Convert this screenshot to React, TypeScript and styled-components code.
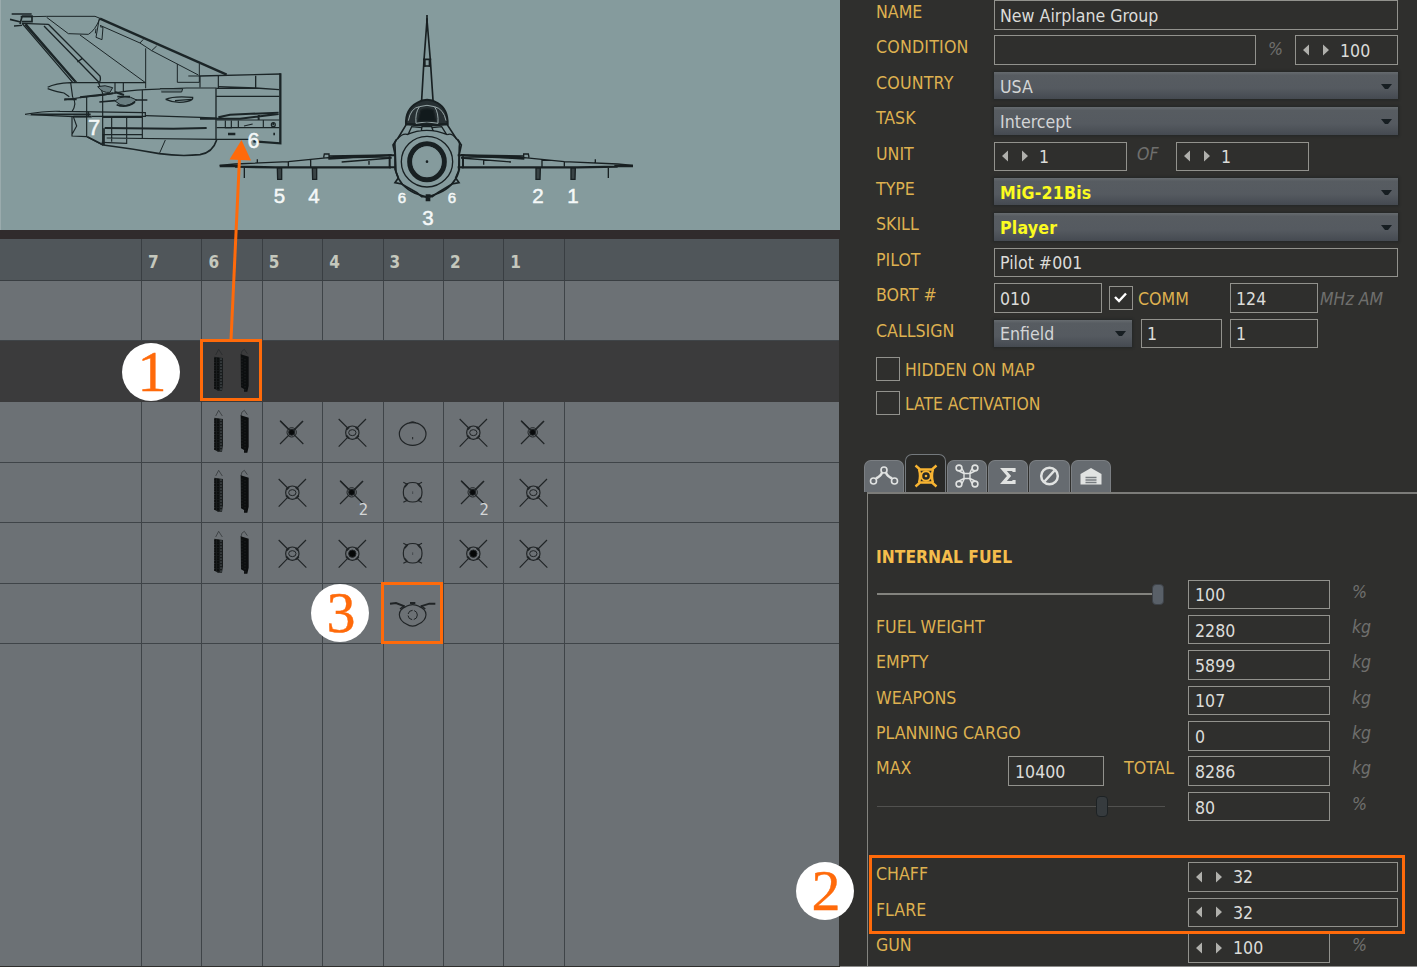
import React from "react";
import styled, { createGlobalStyle, css } from "styled-components";

const GlobalStyle = createGlobalStyle`
  * { box-sizing: border-box; }
  body { margin: 0; background: #2f2f2d; overflow: hidden; }
`;

const uiFont = `"DejaVu Sans Condensed", "DejaVu Sans", sans-serif`;
const orange = "#ff6a0a";

const Screen = styled.main`
  position: relative;
  display: flex;
  width: 1417px;
  height: 967px;
  overflow: hidden;
  background: #2f2f2d;
  font-family: ${uiFont};
  font-stretch: condensed;
  font-size: 17.6px;
`;

/* ---------- left: payload ---------- */
const PayloadPanel = styled.section`
  display: flex;
  flex-direction: column;
  width: 840px;
  height: 966px;
  flex: none;
`;
const Diagram = styled.div`
  height: 230px;
  background: #859b9d;
  border-left: 1px solid #9aabad;
  svg { display: block; margin-left: -1px; }
`;
const Divider = styled.div`
  height: 9px;
  background: #302b2c;
`;
const columns = "142px repeat(7, 60.4px) 1fr";
const GridHeader = styled.div`
  display: grid;
  grid-template-columns: ${columns};
  width: 839px;
  height: 42px;
  background: #50565a;
`;
const HeadCell = styled.div<{ $last?: boolean }>`
  display: flex;
  align-items: center;
  padding: 4px 0 0 6px;
  border-right: ${(p) => (p.$last ? "0" : "1.5px solid #393e42")};
  border-bottom: 1.5px solid #393e42;
  color: #c5c8bd;
  font-weight: bold;
  font-size: 17px;
`;
const GridRow = styled.div<{ $selected?: boolean; $fill?: boolean }>`
  display: grid;
  grid-template-columns: ${columns};
  width: 839px;
  ${(p) => (p.$fill ? css`flex: 1;` : css`height: 60.4px;`)}
  background: ${(p) => (p.$selected ? "#3b3b3c" : "#6c7175")};
`;
const Cell = styled.div<{ $plain?: boolean; $last?: boolean; $noBottom?: boolean }>`
  position: relative;
  border-right: ${(p) => (p.$last || p.$plain ? "0" : "1.5px solid #3f4448")};
  border-bottom: ${(p) => (p.$noBottom || p.$plain ? "0" : "1.5px solid #3f4448")};
  svg { display: block; margin-left: -1.2px; }
`;
const Count = styled.span`
  position: absolute;
  left: 35.5px;
  top: 38px;
  font-size: 16.5px;
  line-height: 20px;
  color: #d4d6d7;
`;

/* ---------- right: properties ---------- */
const Properties = styled.section`
  flex: 1;
  display: flex;
  flex-direction: column;
  height: 967px;
  border-bottom: 1px solid #8b8b89;
`;
const Form = styled.div`
  flex: none;
  padding-left: 36px;
  height: 354px;
`;
const Row = styled.div`
  display: flex;
  align-items: flex-start;
  height: 35.4px;
`;
const Label = styled.span<{ $w?: number; $drop?: number; $ls?: number }>`
  flex: none;
  width: ${(p) => (p.$w ? p.$w + "px" : "auto")};
  padding-top: ${(p) => p.$drop ?? 0}px;
  line-height: 24px;
  color: #deb150;
  letter-spacing: ${(p) => p.$ls ?? 0}px;
  white-space: pre;
`;
const Field = styled.div<{ $w: number; $ml?: number; $inset?: number; $top?: number }>`
  flex: none;
  display: flex;
  align-items: center;
  width: ${(p) => p.$w}px;
  height: 29.5px;
  margin-left: ${(p) => p.$ml ?? 0}px;
  padding: ${(p) => p.$top ?? 3}px 0 0 ${(p) => p.$inset ?? 5}px;
  border: 1.5px solid #92928d;
  color: #dcdcd9;
  white-space: pre;
`;
const Combo = styled.div<{ $w: number; $accent?: boolean }>`
  flex: none;
  display: flex;
  align-items: center;
  justify-content: space-between;
  width: ${(p) => p.$w}px;
  height: 27.5px;
  margin-top: 1px;
  padding: 2px 6px 0 6px;
  background: linear-gradient(#666b6f 0, #575c61 12%, #555a60 60%, #454a51 100%);
  box-shadow: 0 0 2px 1px #242727;
  color: ${(p) => (p.$accent ? "#fbfb20" : "#d3d5d6")};
  font-weight: ${(p) => (p.$accent ? "bold" : "normal")};
  letter-spacing: ${(p) => (p.$accent ? 0.2 : 0)}px;
`;
const Unit = styled.span<{ $ml: number; $drop?: number; $w?: number }>`
  flex: none;
  width: ${(p) => (p.$w ? p.$w + "px" : "auto")};
  margin-left: ${(p) => p.$ml}px;
  padding-top: ${(p) => p.$drop ?? 0}px;
  line-height: 24px;
  color: #6f6f6d;
  font-style: italic;
  font-size: 17.5px;
  white-space: pre;
`;
const Check = styled.span<{ $ml?: number; $mt?: number }>`
  flex: none;
  display: flex;
  width: 24px;
  height: 24px;
  margin: ${(p) => p.$mt ?? 0}px 0 0 ${(p) => p.$ml ?? 0}px;
  border: 1.5px solid #92928d;
`;
const CheckRow = styled.div`
  flex: none;
  display: flex;
  gap: 5px;
  height: 34px;
  padding: 2.5px 0 0 36px;
  font-size: 17.4px;
`;
const Arrows = styled.svg`
  width: 28px;
  height: 14px;
  margin: -1px 9px 0 2px;
  fill: #b0b0ac;
`;
const Tabs = styled.div`
  display: flex;
  align-items: flex-end;
  gap: 1px;
  height: 70px;
  padding: 0 0 0 24px;
  flex: none;
`;
const Tab = styled.div<{ $active?: boolean }>`
  display: flex;
  align-items: center;
  justify-content: center;
  width: ${(p) => (p.$active ? 40.5 : 40.3)}px;
  height: ${(p) => (p.$active ? 38.5 : 32.5)}px;
  padding-top: ${(p) => (p.$active ? 5 : 0)}px;
  border: 1.5px solid ${(p) => (p.$active ? "#74797d" : "#7b7f83")};
  border-bottom: 0;
  border-radius: 7px 7px 0 0;
  background: ${(p) => (p.$active ? "#292927" : "#666b70")};
`;
const TabBody = styled.div`
  flex: 1 1 0;
  min-height: 0;
  margin-left: 27px;
  padding-left: 8px;
  border-top: 2px solid #7c7c79;
  border-left: 1.5px solid #84847f;
`;
const SectionTitle = styled.h2`
  margin: 0;
  height: 85.5px;
  padding-top: 51px;
  color: #f5bd4c;
  font-size: 17.3px;
  line-height: 24px;
  font-weight: bold;
`;
const Slider = styled.div`
  flex: none;
  display: flex;
  align-items: center;
  width: 290px;
  height: 29px;
  margin: 0 22px 0 0;
  padding-left: 1px;
`;
const Track = styled.span<{ $w: number; $dim?: boolean }>`
  width: ${(p) => p.$w}px;
  height: ${(p) => (p.$dim ? 1.5 : 2)}px;
  background: ${(p) => (p.$dim ? "#51514f" : "#83837e")};
`;
const Thumb = styled.span<{ $dim?: boolean }>`
  width: 12px;
  height: 21px;
  border-radius: 4px;
  border: 1.5px solid ${(p) => (p.$dim ? "#1d2224" : "#3d4248")};
  background: ${(p) => (p.$dim ? "#363b3e" : "#596068")};
`;
const Spacer = styled.div`
  height: 35px;
`;

/* ---------- annotations ---------- */
const Outline = styled.div<{ $x: number; $y: number; $w: number; $h: number }>`
  position: absolute;
  left: ${(p) => p.$x}px;
  top: ${(p) => p.$y}px;
  width: ${(p) => p.$w}px;
  height: ${(p) => p.$h}px;
  border: 3px solid ${orange};
`;
const Callout = styled.div<{ $x: number; $y: number }>`
  position: absolute;
  left: ${(p) => p.$x}px;
  top: ${(p) => p.$y}px;
  display: flex;
  align-items: center;
  justify-content: center;
  width: 58px;
  height: 58px;
  padding-left: 2px;
  border-radius: 50%;
  background: #fff;
  color: ${orange};
  font-family: "Liberation Serif", serif;
  font-size: 58px;
  line-height: 58px;
  -webkit-text-stroke: 0.4px ${orange};
`;
const ArrowLayer = styled.svg`
  position: absolute;
  left: 0;
  top: 0;
  pointer-events: none;
`;

function SideView() {
  return (
    <g transform="scale(.33333)" fill="none" stroke="#1b2527" strokeWidth="3">
      <path strokeWidth="5" d="M35 42H95M30 58L62 66M66 50L60 72M66 48H96V65H66M62 50H96" />
      <path d="M95 50L140 49H285L300 55M140 52L205 101L265 103Q285 92 300 55M298 55L288 112L306 119L309 82L300 80M288 86L286 100" />
      <path strokeWidth="7" d="M300 56L680 224" />
      <path d="M300 76L420 129L430 118M420 129L455 152L470 138M455 152L595 225M565 228H600M532 192V247H598V192M437 145V265M240 105L435 247" />
      <path strokeWidth="4" d="M66 70L218 247M78 72L230 247M66 70L145 73M42 78L66 76M132 78L296 246M145 73L300 228Q304 242 296 250M232 186L246 176" />
      <path strokeWidth="5" d="M75 74L225 245" />
      <path strokeWidth="3.5" d="M143 262Q165 250 212 248H438M143 266Q175 277 192 279L208 290M192 300L260 290L305 286M212 248L218 292M296 250L308 280V350M260 290V410L308 435V350M305 286Q390 270 437 269L560 264H650M345 250V282M370 250V276M427 270V415M655 228V265M600 228V262" />
      <path strokeWidth="6" d="M193 298H230M240 292L305 284L340 280M345 276L372 285" />
      <path fill="#6b7f82" d="M293 260Q315 253 338 263L330 277Q308 280 293 260M480 266H548L545 276H484M345 303Q372 278 410 300Q375 332 345 303" />
      <path strokeWidth="5" d="M298 306L345 302M408 300H442M350 314Q378 326 405 306M352 290H390" />
      <path strokeWidth="4" d="M497 298Q520 287 578 292Q580 301 563 304Q527 312 497 298M525 302L575 298" />
      <path strokeWidth="4" d="M600 228L842 222M655 260L767 264L837 269M767 227V262M650 289H838M648 265V420M650 265H770" />
      <path strokeWidth="7" d="M841 220V430L760 424" />
      <path strokeWidth="3.5" d="M75 343Q140 332 180 334L436 338V349H275M75 343L220 350H260" />
      <path strokeWidth="5" d="M92 343H272M220 350H275M265 335V348" />
      <path strokeWidth="3.5" d="M218 292Q232 310 216 335M216 350V408L260 410M220 350L230 378L215 405M436 347L600 352L650 354" />
      <path strokeWidth="6" d="M600 356H720L836 342M655 352L690 344L836 338M314 384L520 386L620 384M776 345V360" />
      <path strokeWidth="3.5" d="M308 352H427M335 352V425M380 352V430L305 427M308 404H427M320 414L650 418H760M650 360H838M650 383H838M676 362V384H694V362M715 362V383M732 378L758 372M790 360V383M814 374A5 5 0 1 0 826 374A5 5 0 1 0 814 374" />
      <path strokeWidth="8" d="M684 402H706M820 402H825M817 372H823" />
      <path strokeWidth="5" d="M262 410L310 435Q390 445 478 461Q540 470 600 464Q638 458 650 420M312 434V385" />
      <path d="M496 420L478 461M310 404V435" />
    </g>
  );
}

function Wing() {
  return (
    <g>
      <path strokeWidth="7" d="M14 498H70M60 500L180 502H528" />
      <path strokeWidth="4" d="M14 496L60 492L220 485L340 473L530 465M340 477Q440 470 530 472M220 485V500M287 478V502M462 480V494M380 486L530 474M127 478V490M326 472L328 462H342V473M88 504V534M342 468L530 465" />
      <path strokeWidth="6" d="M345 474L528 466M524 466V502M520 466H540M522 502H540" />
      <path fill="#3a4446" d="M187 504H200V538H188ZM292 504H305V538H293Z" />
    </g>
  );
}

function FrontView() {
  return (
    <g transform="translate(215 0) scale(.33333)" fill="none" stroke="#182022" strokeWidth="4">
      <path strokeWidth="5" d="M636 45V82M636 60L627 180L620 300M636 60L646 180L654 300M624 178H649M624 198H649" />
      <path strokeWidth="6" d="M636 55V85M629 178V200M644 178V200" />
      <path strokeWidth="6" fill="#273033" d="M573 373Q571 328 605 309Q636 290 668 309Q699 327 698 373Z" />
      <path stroke="#9aa9aa" strokeWidth="3" d="M580 362Q587 324 613 320Q636 312 659 320Q686 327 693 362M613 321Q600 338 603 370M659 321Q671 338 669 370M603 370Q635 361 669 370" />
      <path fill="#111a1c" d="M610 363L618 331Q636 323 655 331L662 363Z" />
      <path strokeWidth="5" fill="#859b9d" d="M574 373L548 416Q537 423 540 440L543 515Q553 558 600 580L636 592L670 580Q719 558 731 515L733 440Q737 423 724 416L696 373Q637 380 574 373Z" />
      <path strokeWidth="4" d="M575 404Q635 378 697 404M579 404L590 380L620 383M695 404L680 380L652 383M619 392L621 380H650L654 392M548 416Q564 398 579 404M724 416Q710 398 697 404" />
      <ellipse cx="636" cy="485" rx="77" ry="76" />
      <ellipse cx="636" cy="485" rx="52" ry="54" strokeWidth="15" />
      <ellipse cx="636" cy="485" rx="43" ry="45" stroke="#80979a" strokeWidth="2" />
      <circle cx="636" cy="485" r="2" />
      <path strokeWidth="5" d="M544 420L534 435L540 462V508L550 534L540 548L560 552L606 578L620 590H652L668 578L711 552L732 548L722 534L733 508V462L739 435L728 420" />
      <path strokeWidth="10" d="M632 588H647M632 599H646" />
      <Wing />
      <g transform="translate(1268 0) scale(-1 1)"><Wing /></g>
    </g>
  );
}

const diagramLabels: [string, number, number, number][] = [
  ["7", 94, 135, 22], ["6", 253.5, 148, 21.5], ["5", 279.5, 203, 20.5], ["4", 314, 203, 20.5],
  ["2", 538, 203, 20.5], ["1", 573, 203, 20.5], ["3", 428, 225, 20.5], ["6", 402, 203, 15], ["6", 452, 203, 15],
];

function AircraftDiagram() {
  return (
    <svg width="840" height="230" viewBox="0 0 840 230">
      <SideView />
      <FrontView />
      <g fill="#f4f8f8" stroke="#f4f8f8" strokeWidth=".5" fontFamily="Liberation Sans" textAnchor="middle">
        {diagramLabels.map(([t, x, y, s], i) => (
          <text key={i} x={x} y={y} fontSize={s}>{t}</text>
        ))}
      </g>
    </svg>
  );
}

type StoreKind = "pods" | "missile" | "missile2" | "rocket" | "bomb" | "tank" | "drum" | "winged";

function Store({ kind }: { kind: StoreKind }) {
  const body = (() => {
    switch (kind) {
      case "pods":
        return (
          <>
            <path d="M44 42L53 25L64 42M120 42Q120 28 130 25L139 38" strokeWidth="2.5" opacity=".7" />
            <path d="M40 47L66 51V130L63 149H51L40 143Z" fill="#191c1d" strokeWidth="0" />
            <path d="M60 52V148" stroke="#43494c" strokeWidth="4" strokeDasharray="5 4" />
            <path d="M42 50V146M51 50V148" strokeWidth="4" strokeDasharray="6 2" stroke="#070808" />
            <path d="M119 40L143 47V134L139 152H129V144L120 139Z" fill="#0c0e0f" strokeWidth="0" />
            <path d="M123 50V138M132 55V148" stroke="#33383a" strokeWidth="2" strokeDasharray="3 6" />
          </>
        );
      case "missile":
      case "missile2":
        return (
          <>
            <path d="M54 56L124 126M54 126L90 90" strokeWidth="3.5" />
            <path d="M55 57L85 87M95 85L123 57" strokeWidth="5" />
            <circle cx="89" cy="91" r="14" strokeWidth="3" />
            <circle cx="89" cy="91" r="9" fill="#080a0b" />
          </>
        );
      case "rocket":
      case "bomb":
        return (
          <>
            <path d="M50 51L77 78M105 78L132 51M50 134L77 106M106 107L133 134" strokeWidth="3.5" />
            <circle cx="91" cy="92" r="20" strokeWidth="3.5" />
            <path d="M73 83L81 75M101 75L109 83M73 101L81 109M102 109L110 101" strokeWidth="6" />
            {kind === "bomb"
              ? <circle cx="91" cy="92" r="11" fill="#050707" />
              : <ellipse cx="91" cy="92" rx="11" ry="9" />}
          </>
        );
      case "tank":
        return (
          <>
            <ellipse cx="92" cy="96" rx="40" ry="34" strokeWidth="3.5" />
            <path d="M82 62Q91 56 102 62M92 105V112" />
          </>
        );
      case "drum":
        return (
          <>
            <path d="M75 65Q92 58 109 65Q120 73 120 91Q120 109 109 116Q92 124 75 116Q64 109 64 91Q64 73 75 65Z" strokeWidth="3.5" />
            <path d="M64 61L76 67L68 76M120 61L108 67L116 76M64 121L76 115L68 106M120 121L108 115L116 106" strokeWidth="3.5" />
            <path d="M92 88V96" strokeWidth="1.5" />
          </>
        );
      case "winged":
        return (
          <>
            <path d="M73 70Q92 60 111 70Q132 78 132 95Q131 113 110 123Q92 136 73 123Q53 113 52 95Q52 78 73 70Z" strokeWidth="3.5" />
            <circle cx="92" cy="96" r="14" strokeDasharray="18 5" />
            <path d="M24 62L42 60L68 70M160 62L142 62L116 70M84 60H100" strokeWidth="6" />
            <path d="M54 78L66 68M130 78L118 68" strokeWidth="4" />
          </>
        );
    }
  })();
  return (
    <svg width="60" height="60" viewBox="0 0 180 180" fill="none" stroke="#202426" strokeWidth="3">
      {body}
    </svg>
  );
}

const slots: (StoreKind | null)[][] = [
  [null, null, null, null, null, null, null],
  [null, "pods", null, null, null, null, null],
  [null, "pods", "missile", "rocket", "tank", "rocket", "missile"],
  [null, "pods", "rocket", "missile2", "drum", "missile2", "rocket"],
  [null, "pods", "rocket", "bomb", "drum", "bomb", "rocket"],
  [null, null, null, null, "winged", null, null],
];

function Payload() {
  return (
    <PayloadPanel>
      <Diagram><AircraftDiagram /></Diagram>
      <Divider />
      <GridHeader>
        {["", "7", "6", "5", "4", "3", "2", "1", ""].map((h, i) => (
          <HeadCell key={i} $last={i === 8}>{h}</HeadCell>
        ))}
      </GridHeader>
      {slots.map((row, r) => (
        <GridRow key={r} $selected={r === 1}>
          <Cell $plain={r === 1} />
          {row.map((kind, c) => (
            <Cell key={c} $plain={r === 1}>
              {kind && <Store kind={kind} />}
              {kind === "missile2" && <Count>2</Count>}
            </Cell>
          ))}
          <Cell $plain={r === 1} $last />
        </GridRow>
      ))}
      <GridRow $fill>
        {Array.from({ length: 9 }, (_, i) => <Cell key={i} $noBottom $last={i === 8} />)}
      </GridRow>
    </PayloadPanel>
  );
}

function Select({ value, width = 404, accent }: { value: string; width?: number; accent?: boolean }) {
  return (
    <Combo $w={width} $accent={accent}>
      <span>{value}</span>
      <svg width="11" height="6" viewBox="0 0 11 6"><path d="M0 0H11L7 5H4Z" fill="#171e22" /></svg>
    </Combo>
  );
}

function Spinner({ value, width, ml }: { value: string; width: number; ml?: number }) {
  return (
    <Field $w={width} $ml={ml} $top={1}>
      <Arrows viewBox="0 0 28 14"><path d="M6 1.5V12.5L0 7ZM20 1.5V12.5L26 7Z" /></Arrows>
      {value}
    </Field>
  );
}

function WeightRow({ label, value }: { label: string; value: string }) {
  return (
    <Row>
      <Label $w={312}>{label}</Label>
      <Field $w={142} $inset={6} $top={2}>{value}</Field>
      <Unit $ml={22}>kg</Unit>
    </Row>
  );
}

function TabIcon({ name }: { name: string }) {
  const common = { width: 30, height: 26, viewBox: "0 0 30 26", fill: "none", stroke: "#e1e3e2", strokeWidth: 1.6 };
  if (name === "route")
    return (
      <svg {...common}>
        <circle cx="15" cy="7" r="3" /><circle cx="4.500" cy="18" r="3" /><circle cx="25.500" cy="18" r="3" />
        <path strokeWidth="2.600" d="M13 9.500Q12 13 7 15.500M17 9.500Q18 13 23 15.500" />
      </svg>
    );
  if (name === "payload")
    return (
      <svg {...common} stroke="#f8b432">
        <path strokeWidth="2.400" d="M4.500 2.500L9 6.500H21L25.500 2.500M4.500 23.500L9 19.500H21L25.500 23.500M8 6.500Q10 13 8 19.500M22 6.500Q20 13 22 19.500" />
        <circle cx="15" cy="13" r="4.800" strokeWidth="2" />
        <circle cx="15" cy="13" r="1.300" fill="#f8b432" stroke="none" />
      </svg>
    );
  if (name === "systems")
    return (
      <svg {...common}>
        <circle cx="7" cy="5" r="2.900" /><circle cx="23" cy="5" r="2.900" />
        <circle cx="7" cy="21" r="2.900" /><circle cx="23" cy="21" r="2.900" />
        <path strokeWidth="1.400" d="M7 8L12 10.500V15.500L7 18M23 8L18 10.500V15.500L23 18M10 5.500L12.500 10.500H17.500L20 5.500M10 20.500L12.500 15.500H17.500L20 20.500" />
      </svg>
    );
  if (name === "summary")
    return <svg {...common}><path strokeWidth="3.200" d="M21 9V6.500H10.500L16 13L10.500 19.500H21V17" /></svg>;
  if (name === "none")
    return <svg {...common}><circle cx="14.500" cy="13" r="8.300" strokeWidth="2.500" /><path strokeWidth="2.500" d="M9.500 18.500L19.500 7.500" /></svg>;
  return (
    <svg {...common}>
      <path d="M4.500 21.500V11L15 5L25.500 11V21.500Z" fill="#e1e3e2" stroke="none" />
      <path stroke="#777c80" strokeWidth="1.300" d="M9.500 14.500H20.500M9.500 17H20.500M9.500 19.500H20.500" />
    </svg>
  );
}

const tabs = ["route", "payload", "systems", "summary", "none", "base"];

export default function App() {
  return (
    <>
      <GlobalStyle />
      <Screen>
        <Payload />
        <Properties>
          <Form>
            <Row><Label $w={118}>NAME</Label><Field $w={404}>New Airplane Group</Field></Row>
            <Row>
              <Label $w={118} $ls={0.2}>CONDITION</Label><Field $w={262} />
              <Unit $ml={12} $drop={2} $w={27}>%</Unit><Spinner value="100" width={103} />
            </Row>
            <Row><Label $w={118} $ls={0.2}>COUNTRY</Label><Select value="USA" /></Row>
            <Row><Label $w={118}>TASK</Label><Select value="Intercept" /></Row>
            <Row>
              <Label $w={118}>UNIT</Label><Spinner value="1" width={133} />
              <Unit $ml={10} $w={39}>OF</Unit><Spinner value="1" width={133} />
            </Row>
            <Row><Label $w={118}>TYPE</Label><Select value="MiG-21Bis" accent /></Row>
            <Row><Label $w={118}>SKILL</Label><Select value="Player" accent /></Row>
            <Row><Label $w={118}>PILOT</Label><Field $w={404} $top={2}>Pilot #001</Field></Row>
            <Row>
              <Label $w={118}>BORT #</Label><Field $w={107.5}>010</Field>
              <Check $ml={7.5} $mt={2.5}>
                <svg width="21" height="21" viewBox="0 0 21 21" fill="none" stroke="#fff" strokeWidth="2.400"><path d="M5 10L9 14L16 6.500" /></svg>
              </Check>
              <Label $w={97} $drop={4}> COMM</Label>
              <Field $w={88}>124</Field><Unit $ml={2} $drop={4}>MHz AM</Unit>
            </Row>
            <Row>
              <Label $w={118}>CALLSIGN</Label><Select value="Enfield" width={138} />
              <Field $w={81} $ml={9} $top={2}>1</Field><Field $w={88} $ml={8} $top={2}>1</Field>
            </Row>
          </Form>
          <CheckRow><Check /><Label $drop={1}>HIDDEN ON MAP</Label></CheckRow>
          <CheckRow><Check /><Label $drop={1}>LATE ACTIVATION</Label></CheckRow>
          <Tabs>
            {tabs.map((t) => <Tab key={t} $active={t === "payload"}><TabIcon name={t} /></Tab>)}
          </Tabs>
          <TabBody>
            <SectionTitle>INTERNAL FUEL</SectionTitle>
            <Row>
              <Slider><Track $w={275} /><Thumb /></Slider>
              <Field $w={142} $inset={6} $top={2}>100</Field><Unit $ml={22}>%</Unit>
            </Row>
            <WeightRow label="FUEL WEIGHT" value="2280" />
            <WeightRow label="EMPTY" value="5899" />
            <WeightRow label="WEAPONS" value="107" />
            <WeightRow label="PLANNING CARGO" value="0" />
            <Row>
              <Label $w={132}>MAX</Label><Field $w={96} $inset={6} $top={2}>10400</Field>
              <Label $w={84}>{"    "}TOTAL</Label>
              <Field $w={142} $inset={6} $top={2}>8286</Field><Unit $ml={22}>kg</Unit>
            </Row>
            <Row>
              <Slider><Track $w={219} $dim /><Thumb $dim /><Track $w={57} $dim /></Slider>
              <Field $w={142} $inset={6} $top={2}>80</Field><Unit $ml={22}>%</Unit>
            </Row>
            <Spacer />
            <Row><Label $w={312}>CHAFF</Label><Spinner value="32" width={210} /></Row>
            <Row><Label $w={312}>FLARE</Label><Spinner value="32" width={210} /></Row>
            <Row><Label $w={312}>GUN</Label><Spinner value="100" width={142} /><Unit $ml={22}>%</Unit></Row>
          </TabBody>
        </Properties>

        <Outline $x={200} $y={339} $w={62} $h={62} />
        <Outline $x={381} $y={582} $w={62} $h={62} />
        <Outline $x={869} $y={855} $w={536} $h={79} />
        <ArrowLayer width="300" height="345" viewBox="0 0 300 345">
          <path d="M231 340L239.500 158" stroke={orange} strokeWidth="3" />
          <path d="M241.500 140L229.500 159.500L251 160.500Z" fill={orange} />
        </ArrowLayer>
        <Callout $x={122} $y={343}>1</Callout>
        <Callout $x={311} $y={584}>3</Callout>
        <Callout $x={796} $y={862}>2</Callout>
      </Screen>
    </>
  );
}
